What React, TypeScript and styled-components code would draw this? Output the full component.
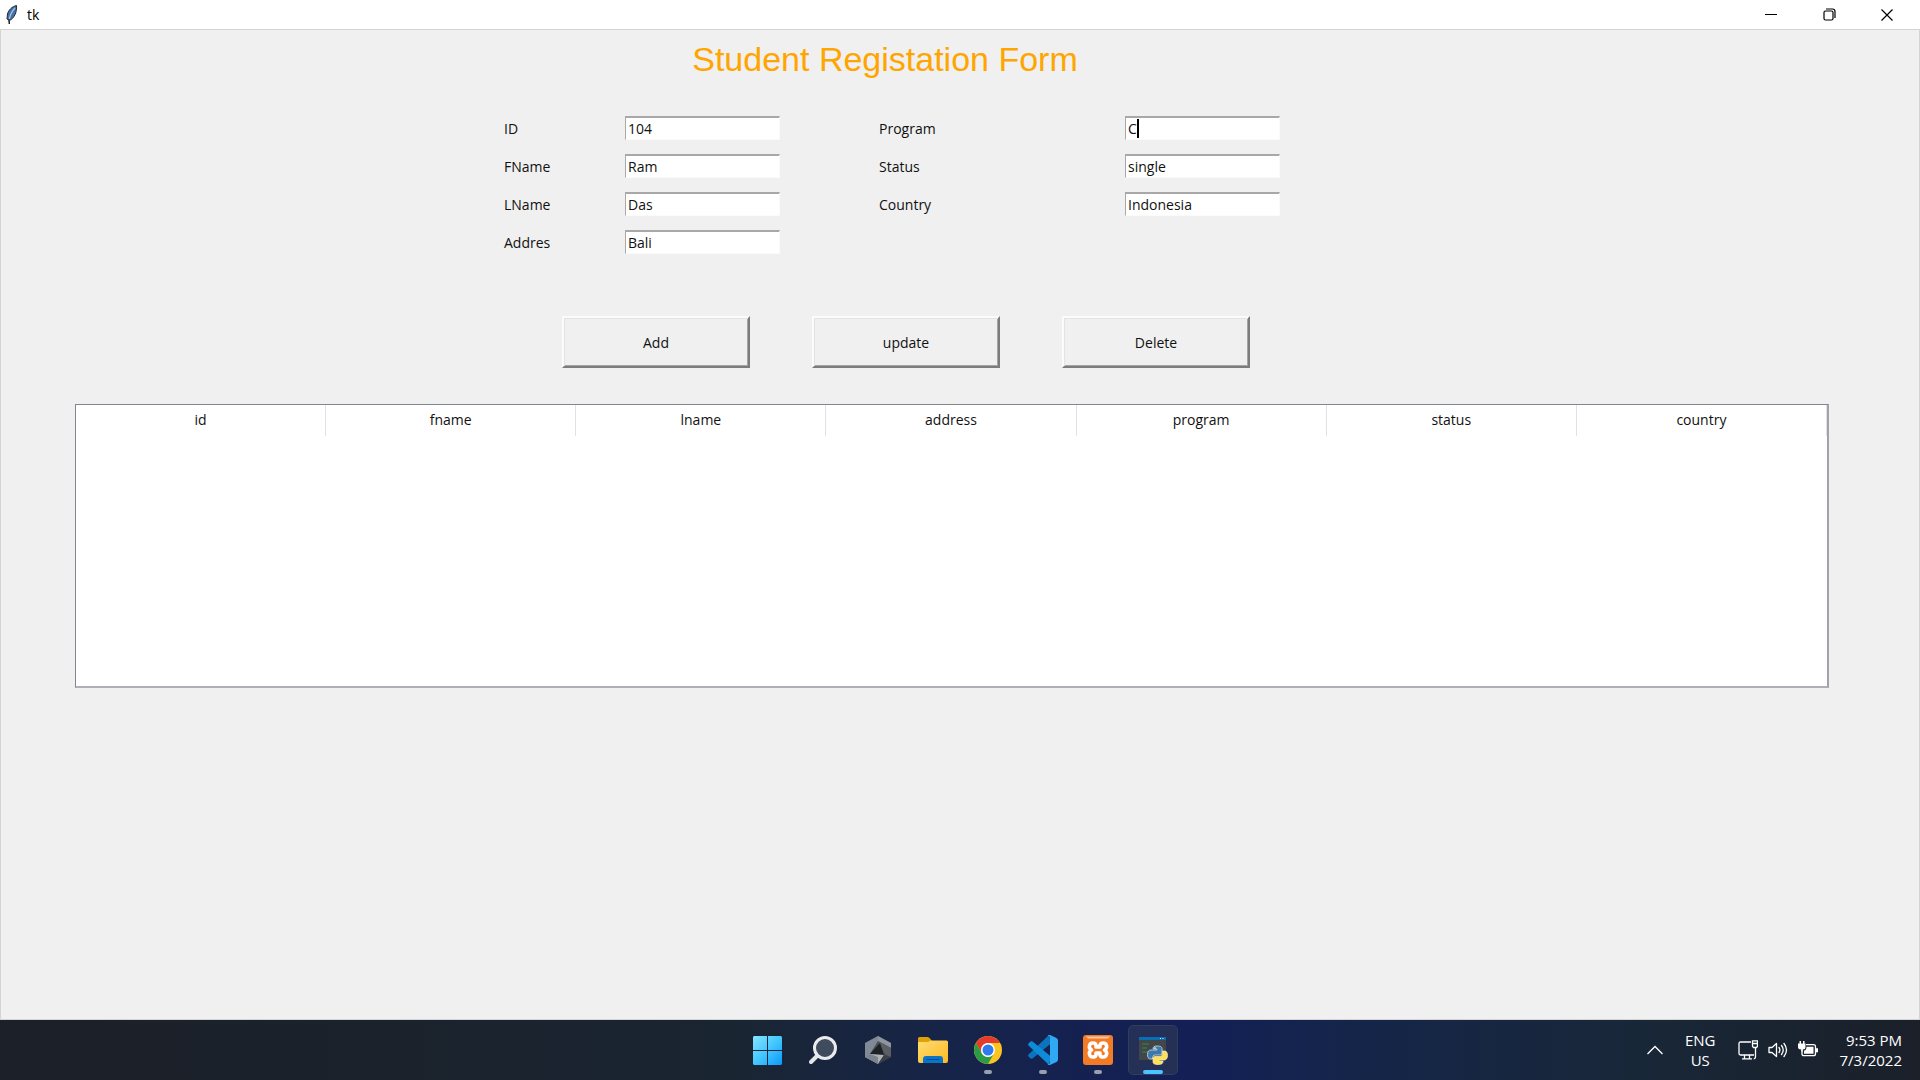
import React, { useEffect, useRef } from "react";
import styled, { createGlobalStyle } from "styled-components";

const UI = `"Open Sans", "Noto Sans", sans-serif`;

const GlobalStyle = createGlobalStyle`
  * { box-sizing: border-box; }
  body { margin: 0; font-family: ${UI}; font-size: 14px; color: #111; }
  button, input { font: inherit; color: inherit; }
`;

const Desktop = styled.div`
  display: flex;
  flex-direction: column;
  min-height: 100vh;
`;

const TitleBar = styled.header`
  display: flex;
  align-items: center;
  height: 29px;
  padding: 0 4px;
  background: #fff;
`;

const WindowName = styled.span`
  flex: 1;
  padding-left: 8px;
  color: #000;
`;

const CaptionButton = styled.button`
  display: flex;
  align-items: center;
  justify-content: center;
  width: 58px;
  height: 29px;
  padding: 0;
  border: 0;
  background: none;
`;

const Client = styled.main`
  flex: 1;
  display: flex;
  flex-direction: column;
  padding: 0 90px 0 74px;
  background: #f0f0f0;
  border: 1px solid #d4d4d4;
`;

const Heading = styled.h1`
  margin: 8px 0 0;
  padding-right: 134px;
  text-align: center;
  font: 400 34px/42px "Liberation Sans", Arial, sans-serif;
  color: #ffa500;
`;

const Form = styled.form`
  display: flex;
  flex-direction: column;
`;

const Fields = styled.div`
  display: flex;
  justify-content: center;
  gap: 99px;
  margin-top: 36px;
  padding-right: 120px;
`;

const FieldColumn = styled.div<{ $label: number }>`
  display: grid;
  grid-template-columns: ${(p) => p.$label}px 155px;
  grid-auto-rows: 24px;
  align-content: start;
  row-gap: 14px;
`;

const FieldLabel = styled.label`
  padding-top: 1px;
  line-height: 24px;
`;

const EntryBox = styled.div`
  position: relative;
`;

const Entry = styled.input`
  display: block;
  width: 155px;
  height: 24px;
  padding: 0 2px 1px;
  border: 1px solid;
  border-top-width: 2px;
  border-color: #a8a8a8 #fbfbfb #fbfbfb #a8a8a8;
  border-radius: 0;
  background: #fff;
  line-height: 20px;
  outline: none;
  caret-color: transparent;
`;

const Caret = styled.span`
  position: absolute;
  top: 3px;
  left: 12px;
  width: 2px;
  height: 19px;
  background: #000;
`;

const Actions = styled.div`
  display: flex;
  justify-content: center;
  gap: 62px;
  margin-top: 62px;
  padding-right: 92px;
`;

const ActionButton = styled.button`
  width: 188px;
  height: 52px;
  padding: 0;
  border: 2px solid;
  border-color: #fbfbfb #7c7c7c #7c7c7c #fbfbfb;
  background: #f0f0f0;
  box-shadow: inset 1px 1px #e3e3e3, inset -1px -1px #a5a5a5;
`;

const TreeFrame = styled.div`
  height: 284px;
  margin-top: 36px;
  border: 1px solid #82868f;
  border-right: 2px solid #a0a3aa;
  border-bottom: 2px solid #adb0b6;
  background: #fff;
`;

const Tree = styled.table`
  width: 100%;
  border-collapse: separate;
  border-spacing: 0;
  table-layout: fixed;
`;

const TreeHead = styled.th`
  height: 31px;
  padding: 0 0 2px;
  border-right: 1px solid #e2e2e2;
  font-weight: 400;
  text-align: center;
`;

const Taskbar = styled.footer`
  display: grid;
  grid-template-columns: 1fr auto 1fr;
  height: 60px;
  background: linear-gradient(90deg, #1c2028 0%, #1b222c 20%, #1a2532 38%, #16244a 50%, #131f56 62%, #15254a 70%, #182738 85%, #1b2029 100%);
  color: #fff;
`;

const Apps = styled.nav`
  grid-column: 2;
  display: flex;
  align-items: center;
  gap: 5px;
  padding-left: 1px;
`;

const AppButton = styled.button<{ $active?: boolean }>`
  position: relative;
  display: flex;
  align-items: center;
  justify-content: center;
  width: 50px;
  height: 50px;
  padding: 0;
  border: 1px solid ${(p) => (p.$active ? "#303c60" : "transparent")};
  border-radius: 5px;
  background: ${(p) => (p.$active ? "#243056" : "none")};
`;

const Running = styled.span<{ $active?: boolean }>`
  position: absolute;
  bottom: 0;
  width: ${(p) => (p.$active ? 20 : 8)}px;
  height: 4px;
  border-radius: 2px;
  background: ${(p) => (p.$active ? "#4cc2ff" : "#9a9fae")};
`;

const Tray = styled.div`
  display: flex;
  align-items: center;
  justify-content: flex-end;
  gap: 22px;
  padding-right: 18px;
`;

const TrayButton = styled.button`
  display: flex;
  align-items: center;
  gap: 10px;
  padding: 0;
  border: 0;
  background: none;
  font-size: 15px;
  line-height: 20px;
`;

const Language = styled(TrayButton)`
  display: block;
  text-align: center;
`;

const Clock = styled(TrayButton)`
  display: block;
  text-align: right;
`;

const Feather = () => (
  <svg width="15" height="20" viewBox="0 0 15 20" aria-hidden="true">
    <path d="M12.500.5C8 1.500 4.500 5 3.500 9L3 14l2.500 1.500C10.500 13 13 7 12.500.5z" fill="#4470a6" stroke="#26282c" />
    <path d="M11 3C8 6 5.500 10 5 17" fill="none" stroke="#a5c9ed" strokeWidth="1.200" />
    <path d="M5 14l.3 5" stroke="#222" strokeWidth="1.500" />
  </svg>
);

const StartIcon = () => (
  <svg width="30" height="30" viewBox="0 0 30 30">
    <defs>
      <linearGradient id="win" x1="0" y1="0" x2="30" y2="30" gradientUnits="userSpaceOnUse">
        <stop offset="0" stopColor="#8ae4ff" /><stop offset=".5" stopColor="#43c7ff" /><stop offset="1" stopColor="#0a97fb" />
      </linearGradient>
    </defs>
    <path fill="url(#win)" d="M1 1H14v14H0V2zM15 1h13l1 1v13H15zM0 16H14v14H1l-1-1zM15 16h14v13l-1 1H15z" />
  </svg>
);

const SearchIcon = () => (
  <svg width="30" height="30" viewBox="0 0 30 30">
    <path d="M10 20L3 27" stroke="#e3e5e8" strokeWidth="4" strokeLinecap="round" />
    <circle cx="17" cy="13" r="10.500" fill="#414b5e" stroke="#e9ebee" strokeWidth="3" />
  </svg>
);

const HexIcon = () => (
  <svg width="30" height="30" viewBox="0 0 30 30">
    <path d="M15 1l13 7v14L15 29 2 22V8z" fill="#4a4e53" />
    <path d="M15 1v5L7 19l-5 3V8z" fill="#7f8a96" />
    <path d="M15 1l13 7v5L15 6z" fill="#8d959e" />
    <path d="M15 6l13 7v9l-6-3z" fill="#5a5f65" />
    <path d="M17 8l4 12-14-1z" fill="#1f2225" />
    <path d="M7 19l14 1-6 9L2 22z" fill="#aab2ba" />
    <path d="M7 19l8 3v7L2 22z" fill="#7b838b" />
    <path d="M21 20l7 2-13 7z" fill="#3c4045" />
  </svg>
);

const FolderIcon = () => (
  <svg width="32" height="30" viewBox="0 0 32 30">
    <defs>
      <linearGradient id="fold" x1="0" y1="0" x2="1" y2="1"><stop offset="0" stopColor="#ffdc70" /><stop offset="1" stopColor="#fbba25" /></linearGradient>
    </defs>
    <path d="M1 3.500Q1 2 2.500 2h8q1.500 0 2.500 1.500L15 6v4H1z" fill="#e0a008" />
    <path d="M1 7h10l3-1.500h15.500Q31 5.500 31 7v19q0 2-2 2H3q-2 0-2-2z" fill="url(#fold)" />
    <path d="M6 28v-4q0-3 3-3h14q3 0 3 3v4z" fill="#0a74c9" />
    <path d="M10 24.500h12" stroke="#084a8e" strokeWidth="1.200" strokeLinecap="round" />
  </svg>
);

const ChromeIcon = () => (
  <svg width="30" height="30" viewBox="0 0 30 30">
    <circle cx="15" cy="15" r="14" fill="#fbc520" />
    <path d="M2.900 8A14 14 0 0 1 27.100 8H15a7 7 0 0 0-6.060 10.500z" fill="#e33b2e" />
    <path d="M2.900 8A14 14 0 0 0 15 29l6.060-10.500a7 7 0 0 1-12.120 0z" fill="#2b9b4a" />
    <circle cx="15" cy="15" r="7" fill="#fff" />
    <circle cx="15" cy="15" r="5.500" fill="#2f7cf0" />
  </svg>
);

const CodeIcon = () => (
  <svg width="32" height="32" viewBox="0 0 32 32">
    <path d="M1.500 20.500L22 1l2 8.500L5.500 24.500q-1 .5-2 0L1.500 22.500q-.8-1 0-2z" fill="#0a74bc" />
    <path d="M1.500 11.500L22 31l2-8.500L5.500 7.500q-1-.5-2 0L1.500 9.500q-.8 1 0 2z" fill="#0e8ad8" />
    <path d="M23 1l6.500 3q1.500 1 1.500 2.500v19q0 1.500-1.500 2.500L23 31q-1.500.3-2.500-1 2.500.5 2.500-1.500V3.500q0-2-2.500-1.500Q21.500.7 23 1z" fill="#2fa9f4" />
  </svg>
);

const XamppIcon = () => (
  <svg width="30" height="30" viewBox="0 0 30 30">
    <rect width="30" height="30" rx="3" fill="#f47b25" />
    <path d="M3 1.500h24l-2 2H5z" fill="#fbc7a0" />
    <path d="M10 8c4 0 3 4 3 4h4s-1-4 3-4 5 5 1.500 7C25 17 24 22 20 22s-3-4-3-4h-4s1 4-3 4-5-5-1.500-7C5 13 6 8 10 8z" fill="none" stroke="#fff" strokeWidth="3.600" strokeLinejoin="round" />
  </svg>
);

const PythonIcon = () => (
  <svg width="30" height="30" viewBox="0 0 30 30">
    <path d="M1 2h27v23H1z" fill="#41464b" />
    <path d="M1 2h27v3H1z" fill="#0b6db4" />
    <path d="M22 3.500h1M24.500 3.500h1" stroke="#d5e9f7" />
    <path d="M4 9h7M4 13h5M4 17h6" stroke="#388a42" strokeWidth="1.200" />
    <path d="M19 11c4 0 5 1 5 3v4q0 2-2 2h-5q-2.500 0-2.500 3v1H13c-3 0-3.500-2-3.500-4.500S10.500 15 13 15h6v-1h-4c0-2 1-3 4-3z" fill="#3979ad" stroke="#e6edf2" strokeWidth=".7" />
    <path d="M20 29.500c-4 0-5-1-5-3v-3q0-2 2-2h5q2.500 0 2.500-3V16H26c3 0 3.500 2 3.500 4.500S28.500 25 26 25h-5v1h4c0 2.500-1 3.500-5 3.500z" fill="#ffdf55" stroke="#f5efcd" strokeWidth=".7" />
    <circle cx="17" cy="13" r=".8" fill="#fff" />
  </svg>
);

const MonitorIcon = () => (
  <svg width="20" height="20" viewBox="0 0 20 20" fill="none" stroke="#fff" strokeWidth="1.300">
    <path d="M13 2H2.500Q1 2 1 3.500v10Q1 15 2.500 15H16M6.500 15v3.500M11.500 15v3.500M4 18.800h10" />
    <path d="M14.500.8h5v5.500l-1 1.200h-3l-1-1.200zM14.500 3.500h5M17.500 7.500v9.500q0 1.800-1.800 1.800" />
  </svg>
);

const SpeakerIcon = () => (
  <svg width="20" height="20" viewBox="0 0 20 20" fill="none" stroke="#fff" strokeWidth="1.300" strokeLinecap="round" strokeLinejoin="round">
    <path d="M1 7.500h3L8.500 3.500v13L4 12.500H1z" />
    <path d="M11 7.500q1.800 2.500 0 5M13.500 5.500q3.500 4.500 0 9M16 3.500q5 6.500 0 13" />
  </svg>
);

const BatteryIcon = () => (
  <svg width="20" height="20" viewBox="0 0 20 20">
    <path d="M8 4.700h7.500q2 0 2 2v7q0 2-2 2H6q-2 0-2-2V10" fill="none" stroke="#fff" strokeWidth="1.300" />
    <path d="M8.500 6.700h7v7H6v-3q2.500-.7 2.500-4zM18 8.200h2v4h-2zM0 3.500h7.500V7q0 2.500-2.700 2.500v2H3.200v-2Q0 9.500 0 7zM1.500 1H3v3H1.500zM5 1h1.500v3H5z" fill="#fff" />
  </svg>
);

const LEFT = [["ID", "104"], ["FName", "Ram"], ["LName", "Das"], ["Addres", "Bali"]];
const RIGHT = [["Program", "C"], ["Status", "single"], ["Country", "Indonesia"]];
const COLUMNS = ["id", "fname", "lname", "address", "program", "status", "country"];
const APPS = [
  { name: "Start", icon: <StartIcon /> },
  { name: "Search", icon: <SearchIcon /> },
  { name: "Armoury", icon: <HexIcon /> },
  { name: "File Explorer", icon: <FolderIcon /> },
  { name: "Chrome", icon: <ChromeIcon />, running: true },
  { name: "Visual Studio Code", icon: <CodeIcon />, running: true },
  { name: "XAMPP", icon: <XamppIcon />, running: true },
  { name: "Python", icon: <PythonIcon />, running: true, active: true },
];

type FieldSetProps = { rows: string[][]; label: number; focus?: string };

function FieldSet({ rows, label, focus }: FieldSetProps) {
  const focused = useRef<HTMLInputElement>(null);
  useEffect(() => {
    focused.current?.focus();
  }, []);
  return (
    <FieldColumn $label={label}>
      {rows.map(([name, value]) => (
        <React.Fragment key={name}>
          <FieldLabel htmlFor={name}>{name}</FieldLabel>
          <EntryBox>
            <Entry id={name} type="text" defaultValue={value} spellCheck={false} ref={name === focus ? focused : undefined} />
            {name === focus && <Caret />}
          </EntryBox>
        </React.Fragment>
      ))}
    </FieldColumn>
  );
}

export default function App() {
  return (
    <Desktop>
      <GlobalStyle />
      <TitleBar>
        <Feather />
        <WindowName>tk</WindowName>
        <CaptionButton aria-label="Minimize">
          <svg width="12" height="12"><path d="M0 5.500h12" stroke="#000" /></svg>
        </CaptionButton>
        <CaptionButton aria-label="Restore">
          <svg width="13" height="13" fill="none" stroke="#000" strokeWidth="1.200">
            <rect x="1" y="3" width="9" height="9" rx="1.500" /><path d="M3 1h6.500Q12 1 12 3.500V10" />
          </svg>
        </CaptionButton>
        <CaptionButton aria-label="Close">
          <svg width="12" height="12"><path d="M.5.5l11 11M11.500.5l-11 11" stroke="#000" strokeWidth="1.200" /></svg>
        </CaptionButton>
      </TitleBar>
      <Client>
        <Heading>Student Registation Form</Heading>
        <Form onSubmit={(e) => e.preventDefault()}>
          <Fields>
            <FieldSet rows={LEFT} label={121} />
            <FieldSet rows={RIGHT} label={246} focus="Program" />
          </Fields>
          <Actions>
            <ActionButton type="button">Add</ActionButton>
            <ActionButton type="button">update</ActionButton>
            <ActionButton type="button">Delete</ActionButton>
          </Actions>
        </Form>
        <TreeFrame>
          <Tree>
            <thead>
              <tr>{COLUMNS.map((c) => <TreeHead key={c} scope="col">{c}</TreeHead>)}</tr>
            </thead>
          </Tree>
        </TreeFrame>
      </Client>
      <Taskbar>
        <Apps aria-label="Taskbar">
          {APPS.map((a) => (
            <AppButton key={a.name} aria-label={a.name} $active={a.active}>
              {a.icon}
              {a.running && <Running $active={a.active} />}
            </AppButton>
          ))}
        </Apps>
        <Tray>
          <TrayButton aria-label="Show hidden icons">
            <svg width="16" height="10" fill="none" stroke="#fff" strokeWidth="1.300"><path d="M.5 9L8 1.500 15.500 9" /></svg>
          </TrayButton>
          <Language>ENG<br />US</Language>
          <TrayButton aria-label="Network, volume, battery">
            <MonitorIcon /><SpeakerIcon /><BatteryIcon />
          </TrayButton>
          <Clock>9:53 PM<br />7/3/2022</Clock>
        </Tray>
      </Taskbar>
    </Desktop>
  );
}
